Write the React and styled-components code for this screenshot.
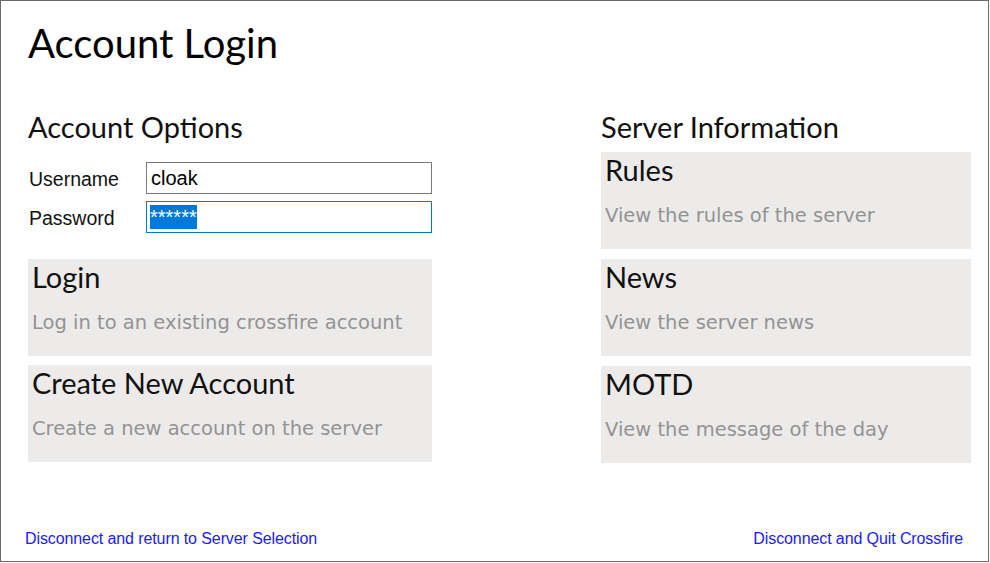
import React from 'react';
import styled, { createGlobalStyle } from 'styled-components';

const GlobalStyle = createGlobalStyle`
  html, body {
    margin: 0;
    padding: 0;
    background: #ffffff;
  }
  * {
    box-sizing: border-box;
  }
`;

const Window = styled.div`
  width: 989px;
  height: 562px;
  border: 1px solid #6a6a6a;
  background: #ffffff;
  display: flex;
  flex-direction: column;
  font-family: 'Liberation Sans', Arial, sans-serif;
`;

const Content = styled.main`
  flex: 1;
  padding: 19px 17px 0 27px;
`;

const Title = styled.h1`
  margin: 0;
  font-family: Lato, 'Open Sans', sans-serif;
  font-weight: 400;
  font-size: 40px;
  line-height: 47px;
  color: #000;
`;

const Columns = styled.div`
  margin-top: 43px;
  display: flex;
  justify-content: space-between;
  align-items: flex-start;
`;

const Column = styled.section`
  width: ${(p) => p.width}px;
  display: flex;
  flex-direction: column;
`;

const SectionHeading = styled.h2`
  margin: 0 0 ${(p) => p.gapBelow || 0}px;
  font-family: Lato, 'Open Sans', sans-serif;
  font-weight: 400;
  font-size: 29px;
  line-height: 34px;
  color: #111;
`;

const Form = styled.form`
  margin-top: 18px;
  display: grid;
  grid-template-columns: 118px 286px;
  row-gap: 7px;
  align-items: center;
`;

const Label = styled.label`
  font-size: 19.5px;
  color: #111;
  padding: 3px 0 0 1px;
`;

const Field = styled.div`
  height: 32px;
  border: 1px solid ${(p) => (p.focused ? '#0078d7' : '#7a7a7a')};
  padding-left: ${(p) => (p.focused ? 3 : 4)}px;
  display: flex;
  align-items: center;
  font-size: 20px;
  color: #000;
  background: #fff;
`;

const Selection = styled.span`
  background: #0078d7;
  color: #ffffff;
  line-height: 24px;
  height: 24px;
`;

const CardList = styled.div`
  margin-top: ${(p) => p.offset}px;
  display: flex;
  flex-direction: column;
  gap: ${(p) => p.gap}px;
`;

const Card = styled.button`
  height: 97px;
  width: 100%;
  border: none;
  margin: 0;
  padding: 0 5px 0 4px;
  background: #ecebea;
  text-align: left;
  display: flex;
  flex-direction: column;
  cursor: pointer;
`;

const CardTitle = styled.span`
  font-family: Lato, 'Open Sans', sans-serif;
  font-size: 29px;
  line-height: 35px;
  color: #111;
`;

const CardText = styled.span`
  margin-top: 17px;
  font-family: 'DejaVu Sans', Verdana, sans-serif;
  font-weight: 400;
  font-size: 19.5px;
  line-height: 23px;
  color: #939393;
`;

const Footer = styled.footer`
  height: 44px;
  padding: 0 25px 0 24px;
  display: flex;
  align-items: center;
  justify-content: space-between;
`;

const LinkLabel = styled.a`
  font-size: 16px;
  letter-spacing: -0.1px;
  color: #1a1aff;
  text-decoration: none;
  cursor: pointer;
`;

const accountOptions = [
  { title: 'Login', text: 'Log in to an existing crossfire account' },
  { title: 'Create New Account', text: 'Create a new account on the server' },
];

const serverInfo = [
  { title: 'Rules', text: 'View the rules of the server' },
  { title: 'News', text: 'View the server news' },
  { title: 'MOTD', text: 'View the message of the day' },
];

const OptionCard = ({ title, text }) => (
  <Card type='button'>
    <CardTitle>{title}</CardTitle>
    <CardText>{text}</CardText>
  </Card>
);

const App = () => (
  <>
    <GlobalStyle />
    <Window>
      <Content>
        <Title>Account Login</Title>
        <Columns>
          <Column width={404}>
            <SectionHeading>Account Options</SectionHeading>
            <Form onSubmit={(e) => e.preventDefault()}>
              <Label>Username</Label>
              <Field>cloak</Field>
              <Label>Password</Label>
              <Field focused>
                <Selection>******</Selection>
              </Field>
            </Form>
            <CardList offset={26} gap={9}>
              {accountOptions.map((item) => (
                <OptionCard key={item.title} {...item} />
              ))}
            </CardList>
          </Column>
          <Column width={370}>
            <SectionHeading gapBelow={8}>Server Information</SectionHeading>
            <CardList offset={0} gap={10}>
              {serverInfo.map((item) => (
                <OptionCard key={item.title} {...item} />
              ))}
            </CardList>
          </Column>
        </Columns>
      </Content>
      <Footer>
        <LinkLabel>Disconnect and return to Server Selection</LinkLabel>
        <LinkLabel>Disconnect and Quit Crossfire</LinkLabel>
      </Footer>
    </Window>
  </>
);

export default App;
